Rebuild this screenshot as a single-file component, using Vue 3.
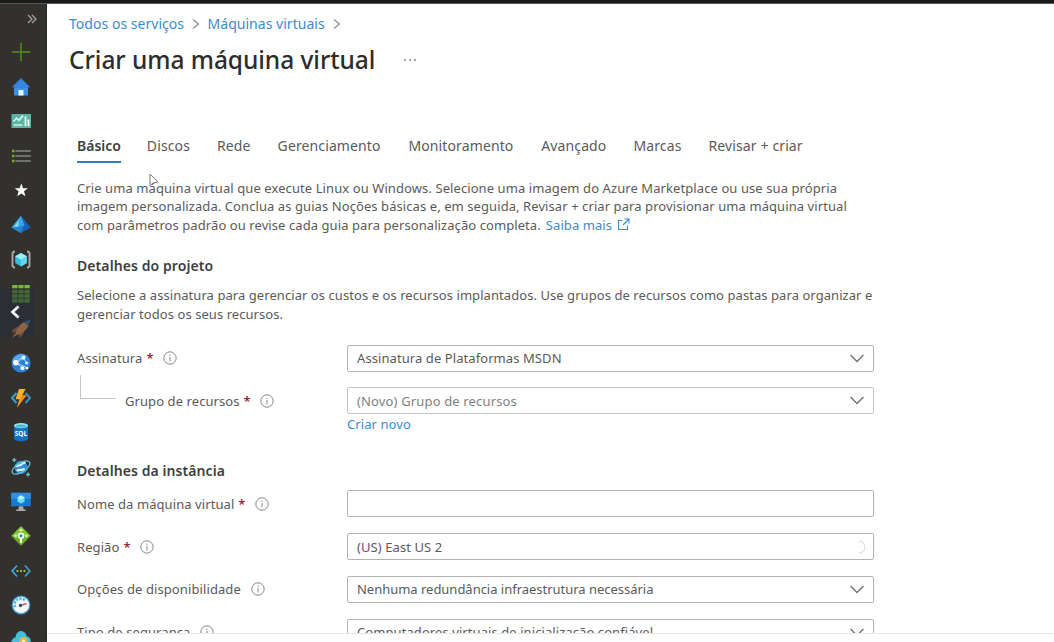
<script setup>
const tabs = ['Básico', 'Discos', 'Rede', 'Gerenciamento', 'Monitoramento', 'Avançado', 'Marcas', 'Revisar + criar']
const projectFields = [
  { label: 'Assinatura', required: true, value: 'Assinatura de Plataformas MSDN', end: 'chevron' },
  { label: 'Grupo de recursos', required: true, child: true, value: '(Novo) Grupo de recursos', muted: true, end: 'chevron' },
]
const instanceFields = [
  { label: 'Nome da máquina virtual', required: true, value: '', end: '' },
  { label: 'Região', required: true, value: '(US) East US 2', end: 'spinner' },
  { label: 'Opções de disponibilidade', wide: true, value: 'Nenhuma redundância infraestrutura necessária', tight: true, end: 'chevron' },
  { label: 'Tipo de segurança', value: 'Computadores virtuais de inicialização confiável', end: 'chevron' },
]
const groups = [
  { id: 'project', fields: projectFields },
  { id: 'instance', fields: instanceFields },
]
</script>

<template>
  <div class="page">
    <div class="topbar"></div>
    <div class="body">
      <aside class="side">
        <svg class="expand" viewBox="0 0 10 10"><path d="M1 1l4 4-4 4M5 1l4 4-4 4" fill="none" stroke="#a5a5a3" stroke-width="1.2" /></svg>
        <svg class="ic plus" viewBox="0 0 20 20"><path d="M10 .8v18.400M.8 10h18.400" stroke="#58910f" stroke-width="1.400" /></svg>
        <svg class="ic" viewBox="0 0 20 20">
          <path d="M3 9h14v9.500H3z" fill="#3f8ee0" /><path d="M10 1L.6 10.200h18.800z" fill="#2f7cd6" /><path d="M10 2.500L3 9.200V11h14V9.200z" fill="#3585de" /><path d="M7.500 13h5v5.500h-5z" fill="#e8f4ff" />
        </svg>
        <svg class="ic" viewBox="0 0 20 20">
          <rect x=".5" y="2" width="19.500" height="14" fill="#5bb5a2" /><path d="M2.500 9.500l3-3.500 2.500 2.500 4-5" fill="none" stroke="#e4fff8" stroke-width="1.400" /><path d="M2.500 13h9" stroke="#d2f1e9" stroke-width="1.500" /><path d="M14.500 4.500V14M17.500 7.500V14" stroke="#effffb" stroke-width="1.800" />
        </svg>
        <svg class="ic" viewBox="0 0 20 20">
          <path d="M4.500 5h15.300M4.500 10h15.300M4.500 15h15.300" stroke="#858583" stroke-width="1.300" /><path d="M1 5h2.500M1 10h2.500M1 15h2.500" stroke="#75ad2a" stroke-width="2.600" />
        </svg>
        <svg class="ic" viewBox="0 0 20 20"><path d="M10.300 2.600l1.700 4.600 4.900.1-3.900 3 1.400 5-4.100-2.900-4.100 2.900 1.400-5-3.900-3 4.900-.1z" fill="#fff" /></svg>
        <svg class="ic" viewBox="0 0 20 20">
          <path d="M10 1L.5 12.500 10 18z" fill="#4cc2f2" /><path d="M10 1l9.700 11.500L10 18z" fill="#1761b8" /><path d="M10 1l3.500 9.500L7.500 13l-7-.5z" fill="#3aa5e8" /><path d="M.5 12.500l7-.8 5.500-1.200-3 7.500z" fill="#2583d2" /><path d="M7.500 5.500L3 12l4.500-.5z" fill="#82def8" />
        </svg>
        <svg class="ic" viewBox="0 0 20 20">
          <path d="M4 1.500H3L1.500 3v13L3 17.500h1M16 1.500h1L18.500 3v13L17 17.500h-1" fill="none" stroke="#a7a7a5" stroke-width="1.900" /><path d="M10 3l5.800 3.300V13L10 16.500 4.200 13V6.300z" fill="#35bfdc" /><path d="M10 3l5.800 3.300L10 9.700 4.200 6.300z" fill="#9aeffa" /><path d="M10 9.700l5.800-3.400V13L10 16.500z" fill="#5dd8eb" />
        </svg>
        <svg class="ic" viewBox="0 0 20 20">
          <path d="M1.200 1h17.600v3.400H1.200z" fill="#79b83a" /><path d="M1.200 5.600h17.600v13H1.200z" fill="#446738" /><path d="M7 1v17.600M13 1v17.600M1.200 5h17.600M1.200 9.800h17.600M1.200 14.200h17.600" stroke="#2d382b" stroke-width=".9" />
        </svg>
        <svg class="ic" viewBox="0 0 20 20">
          <path d="M6 8L2 10.200.8 14l4.600-1.500 2.800 2.700-.6 3.800 4.600-3.200 1-4z" fill="#6d4b37" /><path d="M4.500 14.500c1-5.500 5-10 9.800-12l3 4.500C15 11.500 11 15 6 16z" fill="#8d6443" /><path d="M12.800 3.200L19.500.6 17.200 7z" fill="#2f5576" /><path d="M4 14l-3 5 5-3z" fill="#8e5a2a" />
        </svg>
        <svg class="ic" viewBox="0 0 20 20">
          <circle cx="10" cy="10" r="9.500" fill="#2e7fd8" /><path d="M1 8C4 2 11-1 16 3l-5 4-6 5z" fill="#58a8ec" /><path d="M5 9l7-4.500M5.500 10l6 5M12 5l4 5M15.500 14.500L6 10" stroke="#b6dcfa" stroke-width=".9" /><circle cx="4.800" cy="9.800" r="2.700" fill="#fff" /><circle cx="12.500" cy="4.800" r="2" fill="#e4f4ff" /><circle cx="15.600" cy="10" r="1.600" fill="#d5edff" /><circle cx="11.500" cy="15.300" r="2" fill="#fff" /><circle cx="16" cy="15" r="1.300" fill="#fff" />
        </svg>
        <svg class="ic" viewBox="0 0 20 20">
          <path d="M5.500 5L1 10l4.500 5" fill="none" stroke="#35a1d2" stroke-width="2" /><path d="M14.500 5l4.500 5-4.500 5" fill="none" stroke="#3c8eb5" stroke-width="2" /><path d="M8 1h6.500L11.200 7.500h4L6 19.500l2.400-8.300H4.500z" fill="#fbb12d" /><path d="M11.200 7.500h4L6 19.500l3.800-9z" fill="#f18d1c" />
        </svg>
        <svg class="ic" viewBox="0 0 20 20">
          <path d="M3 3.500v13c0 1.600 3.200 2.800 7 2.800s7-1.200 7-2.800v-13z" fill="#1670c4" /><ellipse cx="10" cy="3.600" rx="7" ry="2.700" fill="#9be2ec" /><ellipse cx="10" cy="4" rx="5" ry="1.500" fill="#4bb8d4" /><text x="10" y="13.500" text-anchor="middle" class="sql">SQL</text>
        </svg>
        <svg class="ic" viewBox="0 0 20 20">
          <circle cx="10" cy="10.300" r="6.600" fill="#328bdb" /><path d="M5 9.500c2-2 4.500-.5 5.500-2s2.500-2 4-1.500M6 14c2-2.500 5 .5 7.500-2.500" fill="none" stroke="#d9f1ff" stroke-width="2.200" /><ellipse cx="10" cy="10.500" rx="10" ry="4.600" transform="rotate(-32 10 10.500)" fill="none" stroke="#63bfd0" stroke-width="1.300" /><path d="M3.300 1v4M1.300 3h4M17 15.500v4M15 17.500h4" stroke="#5cc4ba" stroke-width="1.400" />
        </svg>
        <svg class="ic" viewBox="0 0 20 20">
          <path d="M.2 .8h19.600v13.500H.2z" fill="#1977d2" /><path d="M.2 .8h19.600v6H.2z" fill="#318fe2" /><path d="M10 3.300l3.600 2.100v4.200L10 11.800 6.400 9.600V5.400z" fill="#6be0f3" /><path d="M10 3.300l3.600 2.100L10 7.600 6.400 5.400z" fill="#b6f8fd" /><path d="M8 14.300h4l.7 3.200h2v1.500H5.300v-1.500h2z" fill="#aaa" />
        </svg>
        <svg class="ic" viewBox="0 0 20 20">
          <path d="M10 .3L19.700 10 10 19.700.3 10z" fill="#6fad26" /><path d="M10 .3L19.700 10H.3z" fill="#83c434" /><path d="M10 2.500L7.800 5h4.400zM3 10l2.500-2v4zM17 10l-2.500-2v4z" fill="#e9f8d6" /><circle cx="10" cy="9.700" r="3.300" fill="#edf9e3" /><circle cx="10" cy="9.700" r="1.500" fill="#3183a3" /><path d="M10 12v5" stroke="#eefbe0" stroke-width="2" />
        </svg>
        <svg class="ic" viewBox="0 0 20 20">
          <path d="M6 4.500L1.200 10 6 15.500" fill="none" stroke="#3aa5e0" stroke-width="1.800" /><path d="M14 4.500l4.800 5.500-4.800 5.500" fill="none" stroke="#439bc3" stroke-width="1.800" /><path d="M5.500 10h2M9 10h2M12.500 10h2" stroke="#86bd36" stroke-width="2" />
        </svg>
        <svg class="ic" viewBox="0 0 20 20">
          <circle cx="10" cy="10" r="9.400" fill="#3c96d5" /><circle cx="10" cy="10" r="8.200" fill="#f0f7fb" /><path d="M4.200 12.200a6 6 0 0 1 10-6.500" fill="none" stroke="#5cb5dc" stroke-width="2.600" stroke-dasharray="2.500 1" /><path d="M9.500 10.500l6-2" stroke="#d65b5b" stroke-width="1.600" /><circle cx="9.500" cy="10.500" r="1.700" fill="#35506c" />
        </svg>
        <svg class="ic" viewBox="0 0 20 20">
          <path d="M4.500 16C1.500 16 .3 13.500.5 11.500.7 9 2.500 7.500 4.500 7.400 5 3.500 7 1 10 1s5 2.200 5.600 5.200c2.500.3 4.100 2.300 4.100 4.800 0 3-2 5-4.500 5z" fill="#49bddd" /><path d="M12.500 6.500l4 2.300v4.800l-4 2.300-4-2.300V8.800z" fill="#dcb843" /><circle cx="12.500" cy="11" r="1.600" fill="#fbeaa4" />
        </svg>
        <div class="flyout"><svg viewBox="0 0 10 14"><path d="M8.500 1.500L2.500 7l6 5.500" fill="none" stroke="#fff" stroke-width="2.700" /></svg></div>
      </aside>

      <main class="main">
        <nav class="crumbs">
          <a>Todos os serviços</a><svg viewBox="0 0 8 12"><path d="M1 1.500L6.500 6 1 10.500" /></svg>
          <a>Máquinas virtuais</a><svg viewBox="0 0 8 12"><path d="M1 1.500L6.500 6 1 10.500" /></svg>
        </nav>
        <header class="title"><h1>Criar uma máquina virtual</h1><span class="more"><i></i><i></i><i></i></span></header>

        <div class="content">
          <div class="tabs"><span v-for="(t, i) in tabs" :key="t" :class="{ on: i === 0 }">{{ t }}</span></div>
          <p class="copy intro">
            <span class="l1">Crie uma máquina virtual que execute Linux ou Windows. Selecione uma imagem do Azure Marketplace ou use sua própria</span><br>
            <span>imagem personalizada. Conclua as guias Noções básicas e, em seguida, Revisar + criar para provisionar uma máquina virtual</span><br>
            <span>com parâmetros padrão ou revise cada guia para personalização completa.</span>
            <a class="more-link">Saiba mais<svg viewBox="0 0 13 13"><path d="M5.500 2.500H1.500v9h9V7.500M7.500 1H12v4.500M12 1L6 7" /></svg></a>
          </p>
          <section v-for="g in groups" :key="g.id" :class="g.id">
            <template v-if="g.id === 'project'">
              <h2>Detalhes do projeto</h2>
              <p class="copy">
                <span class="l4">Selecione a assinatura para gerenciar os custos e os recursos implantados. Use grupos de recursos como pastas para organizar e</span><br>
                <span class="l4">gerenciar todos os seus recursos.</span>
              </p>
            </template>
            <h2 v-else class="h-inst">Detalhes da instância</h2>
            <div class="fields">
              <div v-for="f in g.fields" :key="f.label" class="row">
                <div class="label" :class="{ child: f.child }">
                  <span v-if="f.child" class="elbow"></span>
                  <span :class="{ wide: f.wide }">{{ f.label }}</span>
                  <b v-if="f.required">*</b>
                  <svg class="info" viewBox="0 0 14 14"><circle cx="7" cy="7" r="6.200" /><path d="M7 6v4.300M7 3.700v1.300" /></svg>
                </div>
                <div class="box" :class="{ muted: f.muted }">
                  <span :class="{ tight: f.tight }">{{ f.value }}</span>
                  <svg v-if="f.end === 'chevron'" class="chev" viewBox="0 0 16 9"><path d="M1.500 1L8 7.500 14.500 1" /></svg>
                  <svg v-if="f.end === 'spinner'" class="spin" viewBox="0 0 14 14"><path d="M8 1a6 6 0 0 1 0 12" /></svg>
                </div>
              </div>
            </div>
            <a v-if="g.id === 'project'" class="new">Criar novo</a>
          </section>
        </div>
        <footer class="foot"></footer>
      </main>
    </div>
    <svg class="cursor" viewBox="0 0 10 15"><path d="M1 1v11.500L4 10l5-1z" /></svg>
  </div>
</template>

<style>
body { margin: 0; background: #fff; }
</style>

<style scoped>
.page { position: relative; width: 1054px; height: 642px; overflow: hidden; display: flex; flex-direction: column; font-family: 'Noto Sans', 'Open Sans', sans-serif; font-size: 13px; letter-spacing: .08px; color: #5a5a5a; white-space: nowrap; background: #fff; }
.topbar { height: 3px; flex: none; background: #1b1a1b; border-bottom: 1px solid #555; }
.body { flex: 1; min-height: 0; display: flex; }
.side { position: relative; width: 47px; flex: none; box-sizing: border-box; background: #32312e; border-right: 1px solid #2a2a28; display: flex; flex-direction: column; padding-left: 10.500px; overflow: hidden; }
.expand { width: 10px; height: 10px; flex: none; margin: 10px 0 0 16px; }
.ic { width: 20px; height: 20px; flex: none; margin-bottom: 14.550px; position: relative; z-index: 1; }
.ic.plus { margin: 17.500px 0 15.500px; }
.sql { font: bold 6.500px 'Open Sans', sans-serif; letter-spacing: 0; fill: #fff; }
.flyout { position: absolute; z-index: 0; left: 0; top: 285px; width: 34px; height: 48px; background: #2b2e35; }
.flyout svg { position: absolute; left: 10px; top: 16px; width: 10px; height: 14px; }
.main { flex: 1; min-width: 0; display: flex; flex-direction: column; padding-left: 22px; }
a { color: #3a8ccd; }
.crumbs { flex: none; height: 20px; margin-top: 10px; display: flex; align-items: center; font-size: 14px; line-height: 20px; letter-spacing: .03px; }
.crumbs svg { width: 8px; height: 12px; margin: 0 7.500px 0 8px; }
.crumbs path { fill: none; stroke: #8b8b8b; stroke-width: 1.200; }
.title { flex: none; height: 34px; margin-top: 9px; display: flex; align-items: center; }
h1 { margin: 0; width: 305px; font-size: 24.500px; line-height: 34px; font-weight: 500; color: #2d2d2d; letter-spacing: -.05px; }
.more { display: flex; gap: 3px; margin-left: 30px; }
.more i { width: 2px; height: 2px; border-radius: 1px; background: #858585; }
.content { flex: 1; min-height: 0; overflow: hidden; padding-left: 8px; }
.tabs { display: flex; gap: 27px; margin-top: 58px; font-size: 14px; line-height: 22px; letter-spacing: .12px; }
.tabs span { height: 26px; border-bottom: 2px solid transparent; }
.tabs .on { font-weight: 600; letter-spacing: -.02px; color: #404040; border-color: #2a7fc4; margin-right: -1px; }
.tabs span:nth-child(5), .tabs span:nth-child(6) { margin-left: .8px; }
.copy { margin: 0; line-height: 18.700px; }
.intro { margin-top: 15.700px; }
.l1 { letter-spacing: .085px; }
.l4 { letter-spacing: .063px; }
.more-link { margin-left: 5px; }
.more-link svg { width: 13px; height: 13px; margin-left: 5px; vertical-align: -1px; fill: none; stroke: #3a8ccd; stroke-width: 1.100; }
h2 { margin: 21.500px 0 10px; font-size: 14px; line-height: 20px; font-weight: 600; color: #404040; }
.fields { display: flex; flex-direction: column; gap: 15.700px; margin-top: 21px; }
.row { display: flex; align-items: center; height: 27px; }
.label { position: relative; width: 270px; display: flex; align-items: center; }
.label.child { padding-left: 48px; width: 222px; }
.label b { color: #9c2638; font-weight: 600; margin: 0 -.5px 0 4px; }
.elbow { position: absolute; left: 3px; top: -17px; width: 35px; height: 23px; border-left: 1px solid #c4c4c4; border-bottom: 1px solid #c4c4c4; }
.info { width: 14px; height: 14px; margin-left: 10px; fill: none; stroke: #777; stroke-width: .9; }
.wide { letter-spacing: .1px; }
.box { width: 527px; height: 27px; box-sizing: border-box; border: 1px solid #b3b3b3; border-radius: 2px; padding: 0 8px 0 9px; display: flex; align-items: center; justify-content: space-between; }
.muted { color: #7f7f7f; border-color: #c4c4c4; letter-spacing: .15px; }
.tight { letter-spacing: -.02px; }
.chev { width: 16px; height: 9px; fill: none; stroke: #707070; stroke-width: 1.300; }
.spin { width: 14px; height: 14px; fill: none; stroke: #c9d3d6; stroke-width: 1; }
.new { display: block; line-height: 20px; margin-left: 270px; }
.h-inst { margin: 26.800px 0 0; }
.instance .fields { margin-top: 9.300px; }
.foot { flex: none; height: 8px; border-top: 1px solid #e8e8e8; margin-left: -22px; }
.cursor { position: absolute; left: 149px; top: 173px; width: 10px; height: 15px; fill: #fff; stroke: #777; stroke-width: 1; }
</style>
